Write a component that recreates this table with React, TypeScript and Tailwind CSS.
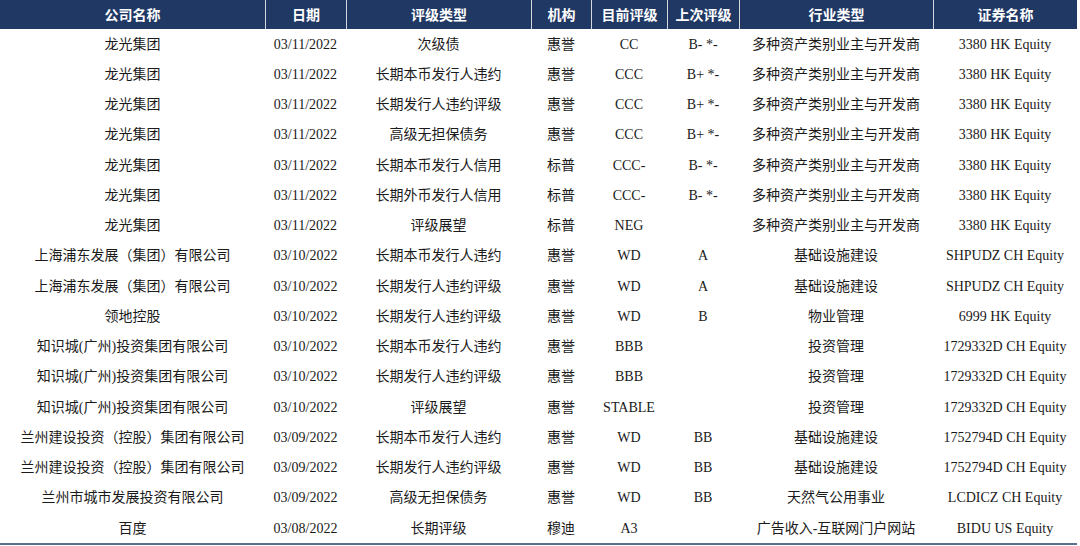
const headers = ["公司名称", "日期", "评级类型", "机构", "目前评级", "上次评级", "行业类型", "证券名称"];

const rows: string[][] = [
  ["龙光集团", "03/11/2022", "次级债", "惠誉", "CC", "B- *-", "多种资产类别业主与开发商", "3380 HK Equity"],
  ["龙光集团", "03/11/2022", "长期本币发行人违约", "惠誉", "CCC", "B+ *-", "多种资产类别业主与开发商", "3380 HK Equity"],
  ["龙光集团", "03/11/2022", "长期发行人违约评级", "惠誉", "CCC", "B+ *-", "多种资产类别业主与开发商", "3380 HK Equity"],
  ["龙光集团", "03/11/2022", "高级无担保债务", "惠誉", "CCC", "B+ *-", "多种资产类别业主与开发商", "3380 HK Equity"],
  ["龙光集团", "03/11/2022", "长期本币发行人信用", "标普", "CCC-", "B- *-", "多种资产类别业主与开发商", "3380 HK Equity"],
  ["龙光集团", "03/11/2022", "长期外币发行人信用", "标普", "CCC-", "B- *-", "多种资产类别业主与开发商", "3380 HK Equity"],
  ["龙光集团", "03/11/2022", "评级展望", "标普", "NEG", "", "多种资产类别业主与开发商", "3380 HK Equity"],
  ["上海浦东发展（集团）有限公司", "03/10/2022", "长期本币发行人违约", "惠誉", "WD", "A", "基础设施建设", "SHPUDZ CH Equity"],
  ["上海浦东发展（集团）有限公司", "03/10/2022", "长期发行人违约评级", "惠誉", "WD", "A", "基础设施建设", "SHPUDZ CH Equity"],
  ["领地控股", "03/10/2022", "长期发行人违约评级", "惠誉", "WD", "B", "物业管理", "6999 HK Equity"],
  ["知识城(广州)投资集团有限公司", "03/10/2022", "长期本币发行人违约", "惠誉", "BBB", "", "投资管理", "1729332D CH Equity"],
  ["知识城(广州)投资集团有限公司", "03/10/2022", "长期发行人违约评级", "惠誉", "BBB", "", "投资管理", "1729332D CH Equity"],
  ["知识城(广州)投资集团有限公司", "03/10/2022", "评级展望", "惠誉", "STABLE", "", "投资管理", "1729332D CH Equity"],
  ["兰州建设投资（控股）集团有限公司", "03/09/2022", "长期本币发行人违约", "惠誉", "WD", "BB", "基础设施建设", "1752794D CH Equity"],
  ["兰州建设投资（控股）集团有限公司", "03/09/2022", "长期发行人违约评级", "惠誉", "WD", "BB", "基础设施建设", "1752794D CH Equity"],
  ["兰州市城市发展投资有限公司", "03/09/2022", "高级无担保债务", "惠誉", "WD", "BB", "天然气公用事业", "LCDICZ CH Equity"],
  ["百度", "03/08/2022", "长期评级", "穆迪", "A3", "", "广告收入-互联网门户网站", "BIDU US Equity"],
];

const cols = "grid grid-cols-[265px_81px_185px_60px_76px_72px_194px_144px]";

const App = () => {
  return (
    <div className="w-[1080px] h-[546px] bg-white overflow-hidden">
      <div className="w-[1077px]">
        <div className={`${cols} h-[29px] bg-[#1f3864]`}>
          {headers.map((h, i) => (
            <div
              key={h}
              className={`flex items-center justify-center text-white font-bold text-[14px] [font-family:'Noto_Sans_CJK_SC',sans-serif] ${
                i > 0 ? "border-l border-white/80" : ""
              }`}
            >
              {h}
            </div>
          ))}
        </div>
        <div className="border-b-2 border-[#5b6e8c]">
          {rows.map((row, r) => (
            <div key={r} className={`${cols} h-[30.25px]`}>
              {row.map((cell, c) => (
                <div
                  key={c}
                  className="flex items-center justify-center whitespace-nowrap text-[14px] text-[#1a1a1a] [font-family:'Liberation_Serif','Noto_Sans_CJK_SC',serif]"
                >
                  {cell}
                </div>
              ))}
            </div>
          ))}
        </div>
      </div>
    </div>
  );
};

export default App;
